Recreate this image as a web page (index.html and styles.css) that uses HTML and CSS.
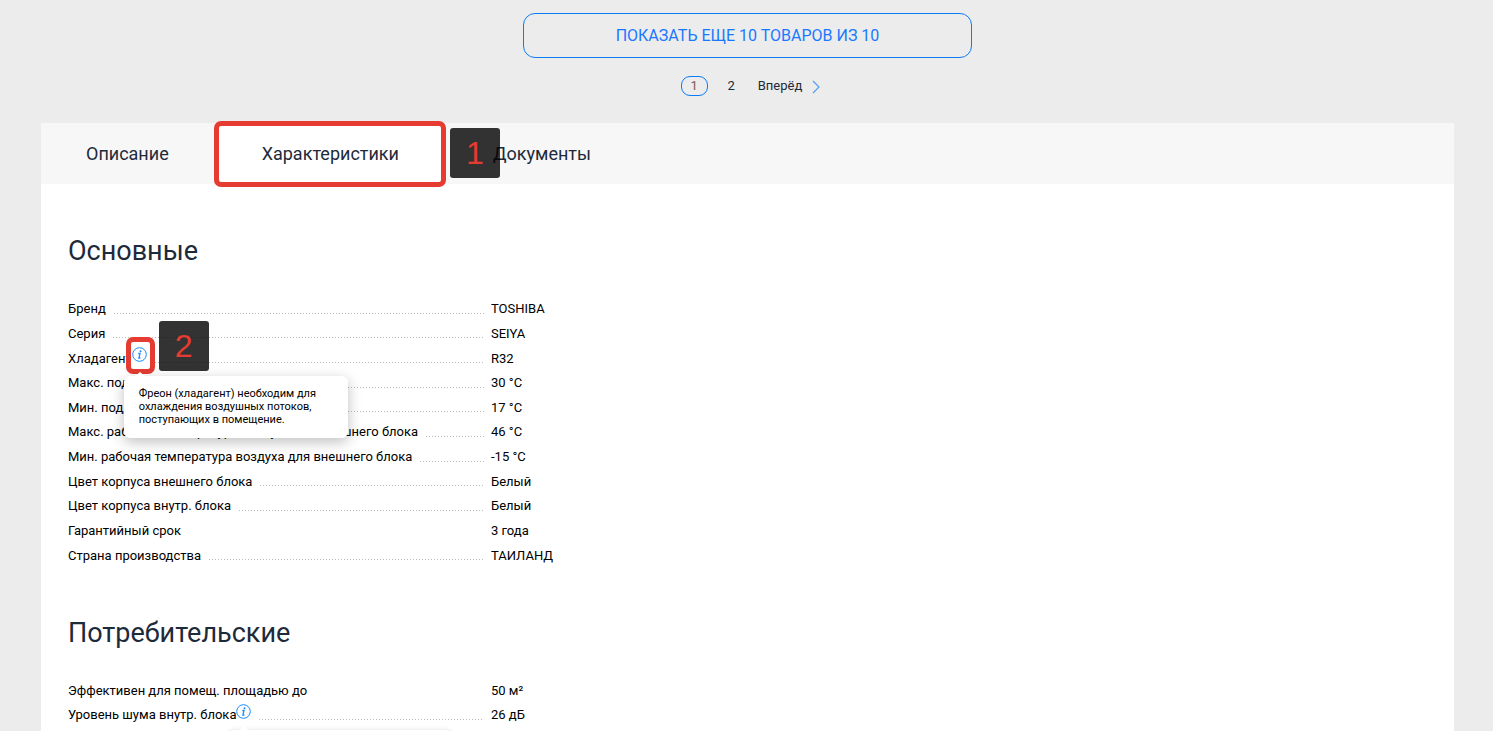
FILE: index.html
```html
<!DOCTYPE html>
<html lang="ru">
<head>
<meta charset="utf-8">
<title>Характеристики</title>
<link rel="stylesheet" href="styles.css">
</head>
<body>
<svg class="sprite" width="0" height="0" aria-hidden="true">
  <symbol id="info" viewBox="0 0 15 15">
    <circle cx="7.5" cy="7.5" r="6.8" fill="none" stroke="#1c8cff" stroke-width="1"/>
    <circle cx="8.5" cy="4.2" r="1" fill="#1c8cff"/>
    <path d="M6.3 6.5h1.7L6.9 11h1.5" fill="none" stroke="#1c8cff" stroke-width="1.3"/>
  </symbol>
</svg>
<main class="page">
  <div class="pager">
    <button class="more" type="button">ПОКАЗАТЬ ЕЩЕ 10 ТОВАРОВ ИЗ 10</button>
    <nav class="pages" aria-label="Страницы">
      <a class="page-link current" href="#">1</a>
      <a class="page-link" href="#">2</a>
      <a class="next" href="#">Вперёд
        <svg class="chevron" viewBox="0 0 8 14" width="8" height="14" aria-hidden="true"><path d="M1 1l6 6-6 6" fill="none" stroke="#4a9bf5" stroke-width="1.1"/></svg>
      </a>
    </nav>
  </div>
  <section class="panel">
    <div class="tabs" role="tablist">
      <button class="tab" type="button" role="tab">Описание</button>
      <button class="tab active" type="button" role="tab" aria-selected="true">Характеристики<span class="frame"></span><span class="step step-tab">1</span></button>
      <button class="tab" type="button" role="tab">Документы</button>
    </div>
    <div class="content">
      <h2>Основные</h2>
      <table class="specs main-specs">
        <tr><th scope="row"><div class="label"><span>Бренд</span><i class="dots"></i></div></th><td>TOSHIBA</td></tr>
        <tr><th scope="row"><div class="label"><span>Серия</span><i class="dots"></i></div></th><td>SEIYA</td></tr>
        <tr><th scope="row"><div class="label"><span>Хладагент</span><span class="hint"><button class="info" type="button" aria-label="Подсказка"><svg width="15" height="15"><use href="#info"/></svg></button><span class="frame"></span><span class="step step-hint">2</span><span class="tip" role="tooltip">Фреон (хладагент) необходим для охлаждения воздушных потоков, поступающих в помещение.</span></span><i class="dots"></i></div></th><td>R32</td></tr>
        <tr><th scope="row"><div class="label"><span>Макс. поддерживаемая температура</span><i class="dots"></i></div></th><td>30 °C</td></tr>
        <tr><th scope="row"><div class="label"><span>Мин. поддерживаемая температура</span><i class="dots"></i></div></th><td>17 °C</td></tr>
        <tr><th scope="row"><div class="label"><span>Макс. рабочая температура воздуха для внешнего блока</span><i class="dots"></i></div></th><td>46 °C</td></tr>
        <tr><th scope="row"><div class="label"><span>Мин. рабочая температура воздуха для внешнего блока</span><i class="dots"></i></div></th><td>-15 °C</td></tr>
        <tr><th scope="row"><div class="label"><span>Цвет корпуса внешнего блока</span><i class="dots"></i></div></th><td>Белый</td></tr>
        <tr><th scope="row"><div class="label"><span>Цвет корпуса внутр. блока</span><i class="dots"></i></div></th><td>Белый</td></tr>
        <tr><th scope="row"><div class="label"><span>Гарантийный срок</span></div></th><td>3 года</td></tr>
        <tr><th scope="row"><div class="label"><span>Страна производства</span><i class="dots"></i></div></th><td>ТАИЛАНД</td></tr>
      </table>
      <h2>Потребительские</h2>
      <table class="specs">
        <tr><th scope="row"><div class="label"><span>Эффективен для помещ. площадью до</span></div></th><td>50 м²</td></tr>
        <tr><th scope="row"><div class="label"><span>Уровень шума внутр. блока</span><span class="hint"><button class="info" type="button" aria-label="Подсказка"><svg width="15" height="15"><use href="#info"/></svg></button><span class="tip faded" role="tooltip"></span></span><i class="dots"></i></div></th><td>26 дБ</td></tr>
      </table>
    </div>
  </section>
</main>
</body>
</html>
```
FILE: styles.css
```css
* { box-sizing: border-box; }
body {
  margin: 0;
  height: 100vh;
  overflow: hidden;
  background: #ececec;
  color: #000;
  font: 13px/20px Roboto, "Liberation Sans", sans-serif;
}
button { margin: 0; padding: 0; border: 0; background: none; font: inherit; color: inherit; cursor: pointer; }
a { color: #1d2a3a; text-decoration: none; }
.sprite { position: absolute; }
.page { padding: 13px 39px 0 41px; }

.pager { display: flex; flex-direction: column; align-items: center; gap: 18px; }
.more {
  width: 449px;
  max-width: 100%;
  height: 45px;
  border: 1px solid #0a7cf5;
  border-radius: 12px;
  color: #1a78ff;
  font-size: 16px;
}
.pages { display: flex; align-items: center; gap: 10px; padding-left: 6px; }
.page-link { width: 27px; height: 20px; line-height: 20px; text-align: center; }
.current { border: 1px solid #0a7cf5; border-radius: 9px; line-height: 18px; color: #7d5a52; }
.next { display: flex; align-items: center; gap: 10px; padding-left: 3px; }
.chevron { margin-top: 2px; }

.panel { margin-top: 27px; background: #fff; min-height: 100vh; }
.tabs { display: flex; height: 61px; background: #f7f7f7; }
.tab { position: relative; padding: 0 47px; font-size: 18px; color: #1d2a3a; }
.tab:first-child { padding: 0 46px 0 45px; }
.active { z-index: 1; background: #fff; }

.frame { position: absolute; border: 5px solid #e63b31; border-radius: 7px; }
.tab .frame { inset: -2px 0 -3px -1px; }
.step {
  position: absolute;
  width: 50px;
  height: 50px;
  border-radius: 3px;
  background: rgba(0, 0, 0, .8);
  color: #e63b31;
  font: 32px/50px "Liberation Sans", Arial, sans-serif;
  text-align: center;
}
.step-tab { left: 100%; top: 5px; margin-left: 4px; }

.content { padding: 50px 27px; }
h2 { margin: 0; font-size: 27px; font-weight: 400; line-height: 34px; color: #1d2a3a; }
.specs { width: 100%; margin-top: 29px; border-collapse: collapse; table-layout: fixed; }
.main-specs { height: 271px; margin-bottom: 48px; }
.specs th { width: 423px; padding: 0 7px 0 0; font-weight: 400; text-align: left; }
.specs td { padding: 0; }
.specs tr { height: 24px; }
.label { display: flex; align-items: center; height: 20px; white-space: nowrap; }
.dots { flex: 1; height: 1px; margin: 8px 0 0 8px; background: repeating-linear-gradient(90deg, #bbb 0 1px, transparent 1px 3px); }

.hint { position: relative; display: flex; }
.info { display: flex; margin-bottom: 8px; background: #fff; }
.info svg { display: block; }
.hint .frame { inset: -10px -8px -4px -6px; background: #fff; }
.hint .info { position: relative; z-index: 1; background: none; }
.step-hint { left: 27px; top: -26px; }
.tip {
  position: absolute;
  z-index: 2;
  left: -8px;
  top: 29px;
  width: 224px;
  min-height: 62px;
  padding: 11px 15px;
  border-radius: 6px;
  background: #fff;
  box-shadow: 0 4px 14px rgba(0, 0, 0, .25);
  font-size: 11px;
  line-height: 13px;
  white-space: normal;
}
.tip::before {
  content: "";
  position: absolute;
  left: 10px;
  top: -4px;
  border: solid transparent;
  border-width: 0 6px 5px;
  border-bottom-color: #fff;
}
.faded { top: 26px; box-shadow: 0 0 5px rgba(0, 0, 0, .12); }
```
